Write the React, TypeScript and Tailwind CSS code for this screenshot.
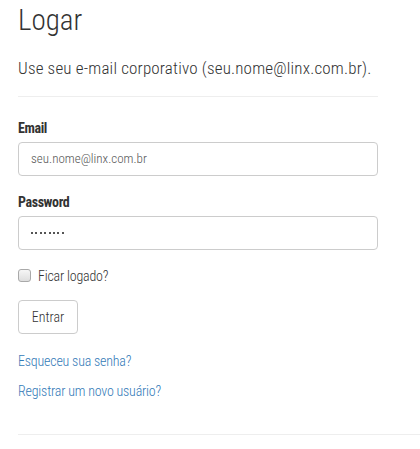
import React from "react";

function Dots() {
  return (
    <div className="flex items-center gap-[2.4px]">
      <span className="w-[2px] h-[2px] bg-[#555]"></span>
      <span className="w-[2px] h-[2px] bg-[#555]"></span>
      <span className="w-[2px] h-[2px] bg-[#555]"></span>
      <span className="w-[2px] h-[2px] bg-[#555]"></span>
      <span className="w-[2px] h-[2px] bg-[#555]"></span>
      <span className="w-[2px] h-[2px] bg-[#555]"></span>
      <span className="w-[2px] h-[2px] bg-[#555]"></span>
      <span className="w-[2px] h-[2px] bg-[#555]"></span>
    </div>
  );
}

export default function App() {
  return (
    <div className="w-[420px] h-[449px] bg-white text-[#333] overflow-hidden font-['Roboto_Condensed','Roboto',sans-serif]">
      <div className="pl-[18px] flex flex-col">
        <div className="w-[360px] flex flex-col">
          <h2 className="mt-[6px] text-[29px] font-light leading-none">Logar</h2>
          <p className="mt-[25px] text-[17px] font-light leading-none whitespace-nowrap tracking-[0.18px]">
            Use seu e-mail corporativo (seu.nome@linx.com.br).
          </p>
          <hr className="mt-[19px] border-0 border-t border-[#eee]" />
          <label className="mt-[24px] text-[14px] font-bold leading-none tracking-[-0.4px]">Email</label>
          <div className="mt-[7px] h-[34px] rounded-[4px] border border-[#ccc] flex items-center px-[12px] text-[13px] font-light text-[#555]">
            seu.nome@linx.com.br
          </div>
          <label className="mt-[19px] text-[14px] font-bold leading-none tracking-[-0.4px]">Password</label>
          <div className="mt-[7px] h-[34px] rounded-[4px] border border-[#ccc] flex items-center px-[12px]">
            <Dots />
          </div>
          <div className="mt-[19px] h-[13px] flex items-center">
            <span className="w-[13px] h-[13px] rounded-[3px] border border-[#a9a9a9] bg-gradient-to-b from-[#f6f6f6] to-[#dedede]"></span>
            <span className="ml-[7px] text-[14px] font-light leading-none tracking-[-0.2px]">Ficar logado?</span>
          </div>
          <div className="mt-[18px] flex">
            <button
              type="button"
              className="h-[34px] w-[60px] rounded-[4px] border border-[#ccc] bg-white text-[14px] font-light text-[#333] leading-none"
            >
              Entrar
            </button>
          </div>
          <a className="mt-[20px] text-[14px] font-light text-[#337ab7] leading-none tracking-[-0.2px]">Esqueceu sua senha?</a>
          <a className="mt-[16px] text-[14px] font-light text-[#337ab7] leading-none tracking-[-0.2px]">Registrar um novo usuário?</a>
        </div>
        <hr className="mt-[36px] border-0 border-t border-[#eee]" />
      </div>
    </div>
  );
}
